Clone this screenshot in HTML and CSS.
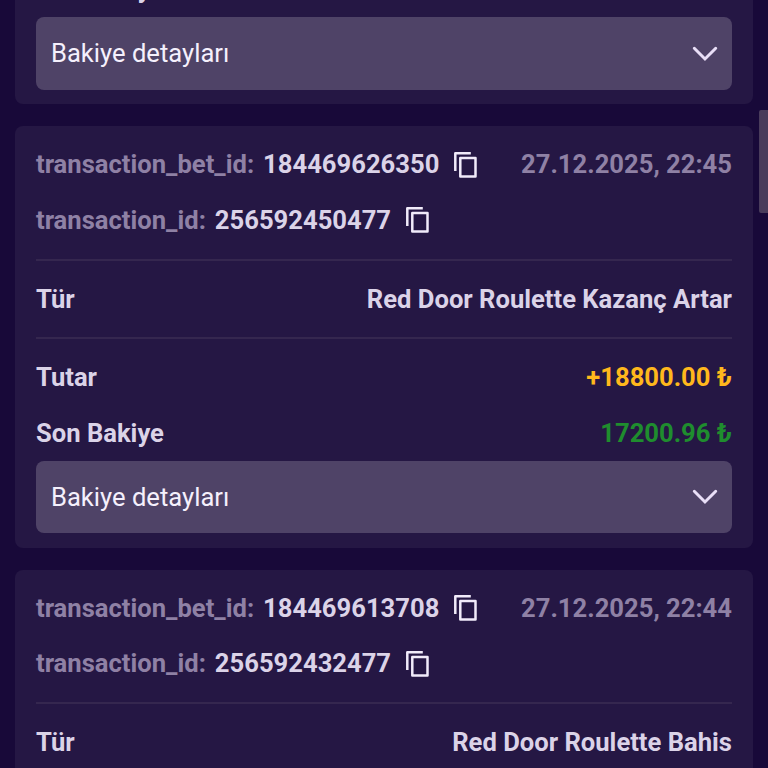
FILE: index.html
```
<!DOCTYPE html>
<html lang="tr">
<head>
<meta charset="utf-8">
<title>Bakiye</title>
<link rel="stylesheet" href="styles.css">
</head>
<body>
<svg class="defs" width="0" height="0">
  <symbol id="copy" viewBox="0 0 23 26"><path d="M1.3 19V1.3H16.8M6.3 6H21.5V24.6H6.3Z" fill="none" stroke="currentColor" stroke-width="2.5" stroke-linejoin="round"/></symbol>
  <symbol id="chevron" viewBox="0 0 26 16"><path d="M2.3 2.3L13 13L23.7 2.3" fill="none" stroke="currentColor" stroke-width="3" stroke-linecap="round"/></symbol>
</svg>
<main class="list">
  <article class="card">
    <div class="bottom">
      <div class="row"><span>Son Bakiye</span></div>
      <div class="details"><span>Bakiye detayları</span><svg class="chevron"><use href="#chevron"/></svg></div>
    </div>
  </article>
  <article class="card">
    <div class="head">
      <div class="row"><div class="id"><span class="muted">transaction_bet_id:</span><span>184469626350</span><svg class="copy"><use href="#copy"/></svg></div><time class="muted">27.12.2025, 22:45</time></div>
      <div class="row"><div class="id"><span class="muted">transaction_id:</span><span>256592450477</span><svg class="copy"><use href="#copy"/></svg></div></div>
    </div>
    <div class="row type"><span>Tür</span><span>Red Door Roulette Kazanç Artar</span></div>
    <div class="bottom">
      <div class="row"><span>Tutar</span><span class="win">+18800.00 ₺</span></div>
      <div class="row"><span>Son Bakiye</span><span class="balance">17200.96 ₺</span></div>
      <div class="details"><span>Bakiye detayları</span><svg class="chevron"><use href="#chevron"/></svg></div>
    </div>
  </article>
  <article class="card">
    <div class="head">
      <div class="row"><div class="id"><span class="muted">transaction_bet_id:</span><span>184469613708</span><svg class="copy"><use href="#copy"/></svg></div><time class="muted">27.12.2025, 22:44</time></div>
      <div class="row"><div class="id"><span class="muted">transaction_id:</span><span>256592432477</span><svg class="copy"><use href="#copy"/></svg></div></div>
    </div>
    <div class="row type"><span>Tür</span><span>Red Door Roulette Bahis</span></div>
  </article>
</main>
<div class="scrollbar"></div>
</body>
</html>
```
FILE: styles.css
```
* { box-sizing: border-box; }
body {
  margin: 0;
  height: 768px;
  overflow: hidden;
  position: relative;
  background: #180939;
  color: #dbd3e8;
  font: 700 25.6px/30px Roboto, sans-serif;
}
.defs { position: absolute; }
.list {
  display: flex;
  flex-direction: column;
  gap: 22px;
  margin-top: -49.5px;
  padding: 0 15px;
}
.card {
  padding: 10.5px 21px 14.5px;
  border-radius: 8px;
  background: #251744;
}
.head { padding-bottom: 11px; }
.row {
  display: flex;
  align-items: center;
  justify-content: space-between;
  height: 55.5px;
  white-space: nowrap;
}
.id { display: flex; align-items: center; gap: 9px; }
.muted { color: #8f81a5; }
.type {
  height: 80px;
  border: solid #35274f;
  border-width: 2px 0;
}
.bottom { padding-top: 11px; }
.card:first-child { padding-top: 0; }
.win { color: #ffb81c; }
.balance { color: #1f8d2e; }
.copy { width: 23px; height: 26px; margin: 1px 0 0 6px; color: #f1ebfa; }
.details {
  display: flex;
  align-items: center;
  justify-content: space-between;
  height: 72.5px;
  padding: 0 14px 0 15px;
  border-radius: 8px;
  background: #4f4367;
  color: #f5f0fc;
  font-weight: 400;
}
.chevron { width: 26px; height: 16px; margin-top: 1px; color: #e9dff7; }
.scrollbar {
  position: absolute;
  top: 110px;
  right: 0;
  width: 9px;
  height: 103px;
  border-radius: 2px 0 0 2px;
  background: #493c5b;
}
```
